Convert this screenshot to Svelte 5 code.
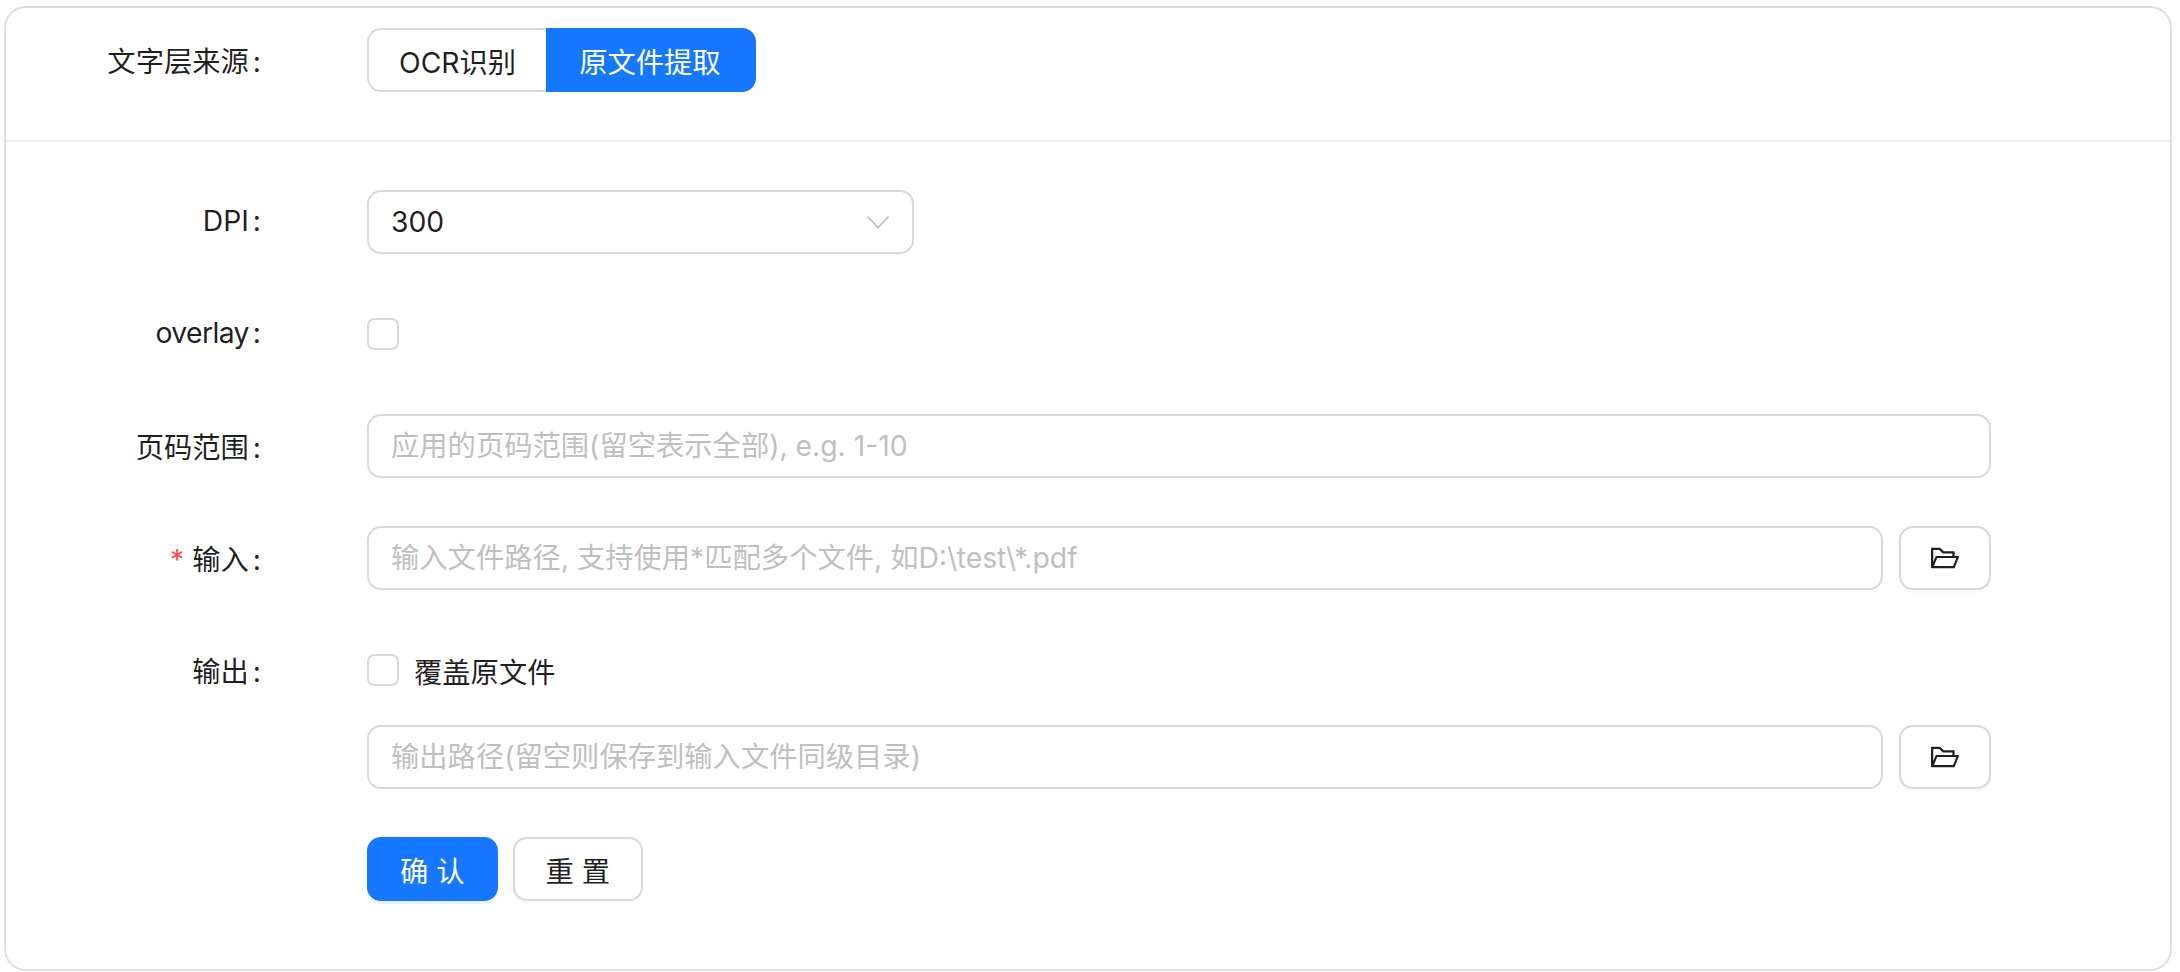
<script lang="ts">
  const folderPath =
    'M928 444H820V330.4c0-17.7-14.3-32-32-32H473L355.7 186.2a8.15 8.15 0 00-5.5-2.2H96c-17.7 0-32 14.3-32 32v592c0 17.7 14.3 32 32 32h698c13 0 24.8-7.9 29.7-20l134-332c1.5-3.8 2.3-7.9 2.3-12 0-17.7-14.3-32-32-32zM136 256h188.5l119.6 114.4H748V444H238c-13 0-24.8 7.9-29.7 20L136 643.2V256zm635.3 512H159l103.3-256h612.4L771.3 768z';

  let source = $state('file');
  let overlay = $state(false);
  let overwrite = $state(false);
</script>

{#snippet folderButton()}
  <button class="btn icon-btn" type="button" aria-label="选择文件">
    <svg viewBox="64 64 896 896" width="28" height="28" fill="currentColor"><path d={folderPath} /></svg>
  </button>
{/snippet}

<div class="card">
  <div class="top">
    <div class="row">
      <div class="label">文字层来源<span class="colon">:</span></div>
      <div class="control">
        <div class="segmented">
          <button type="button" class="seg" class:active={source === 'ocr'} onclick={() => (source = 'ocr')}>OCR识别</button>
          <button type="button" class="seg" class:active={source === 'file'} onclick={() => (source = 'file')}>原文件提取</button>
        </div>
      </div>
    </div>
  </div>

  <form class="form">
    <div class="row">
      <div class="label">DPI<span class="colon">:</span></div>
      <div class="control">
        <div class="select">
          <span>300</span>
          <svg class="chevron" viewBox="0 0 24 14" width="24" height="14" fill="none" stroke="currentColor" stroke-width="1.8"><path d="M1.5 1.5 12 12.5 22.5 1.5" /></svg>
        </div>
      </div>
    </div>

    <div class="row">
      <div class="label"><span class="latin">overlay</span><span class="colon">:</span></div>
      <div class="control">
        <button type="button" class="check" class:on={overlay} aria-label="overlay" onclick={() => (overlay = !overlay)}></button>
      </div>
    </div>

    <div class="row">
      <div class="label">页码范围<span class="colon">:</span></div>
      <div class="control wide">
        <input class="input" placeholder="应用的页码范围(留空表示全部), e.g. 1-10" />
      </div>
    </div>

    <div class="row">
      <div class="label"><span class="req">*</span>输入<span class="colon">:</span></div>
      <div class="control wide">
        <input class="input" placeholder="输入文件路径, 支持使用*匹配多个文件, 如D:\test\*.pdf" />
        {@render folderButton()}
      </div>
    </div>

    <div class="stack">
      <div class="row">
        <div class="label">输出<span class="colon">:</span></div>
        <div class="control">
          <button type="button" class="check" class:on={overwrite} aria-label="覆盖原文件" onclick={() => (overwrite = !overwrite)}></button>
          <span class="check-text">覆盖原文件</span>
        </div>
      </div>
      <div class="row">
        <div class="label"></div>
        <div class="control wide">
          <input class="input" placeholder="输出路径(留空则保存到输入文件同级目录)" />
          {@render folderButton()}
        </div>
      </div>
    </div>

    <div class="row">
      <div class="label"></div>
      <div class="control actions">
        <button class="btn primary" type="button">确 认</button>
        <button class="btn" type="button">重 置</button>
      </div>
    </div>
  </form>
</div>

<style>
  :global(body) {
    margin: 0;
    background: #fff;
  }
  .card {
    box-sizing: border-box;
    width: 2168px;
    height: 965px;
    margin: 6px 0 0 4px;
    border: 2px solid #dedede;
    border-radius: 22px;
    color: rgba(0, 0, 0, 0.88);
    font-family: Inter, "Noto Sans CJK SC", sans-serif;
    font-size: 28.3px;
    background: #fff;
  }
  .top {
    padding: 20px 0 48px;
    border-bottom: 2px solid #f0f0f0;
  }
  .form {
    display: flex;
    flex-direction: column;
    gap: 48px;
    padding-top: 48px;
  }
  .stack {
    display: flex;
    flex-direction: column;
    gap: 23px;
  }
  .row {
    display: flex;
    align-items: center;
    height: 64px;
  }
  .label {
    box-sizing: border-box;
    width: 361px;
    flex: none;
    padding-right: 106px;
    padding-bottom: 2px;
    text-align: right;
    white-space: nowrap;
  }
  .latin {
    letter-spacing: -0.6px;
  }
  .colon {
    margin-left: 4px;
  }
  .req {
    margin-right: 8px;
    color: #ff4d4f;
  }
  .control {
    display: flex;
    align-items: center;
    height: 100%;
    flex: none;
  }
  .wide {
    gap: 16px;
    width: 1624px;
  }
  .actions {
    gap: 15px;
  }
  .segmented {
    display: flex;
    height: 64px;
  }
  .seg {
    height: 64px;
    padding: 0 33px;
    border: 2px solid #d9d9d9;
    background: #fff;
    color: inherit;
    font: inherit;
    cursor: pointer;
  }
  .seg:first-child {
    padding: 0 30px;
    border-radius: 14px 0 0 14px;
    border-right: 0;
  }
  .seg:last-child {
    border-radius: 0 14px 14px 0;
    border-left: 0;
  }
  .seg.active {
    border-color: #1677ff;
    background: #1677ff;
    color: #fff;
  }
  .select {
    box-sizing: border-box;
    display: flex;
    align-items: center;
    justify-content: space-between;
    width: 547px;
    height: 64px;
    padding: 0 22px;
    border: 2px solid #d9d9d9;
    border-radius: 14px;
  }
  .chevron {
    color: #bfbfbf;
  }
  .check {
    box-sizing: border-box;
    width: 32px;
    height: 32px;
    padding: 0;
    border: 2px solid #d9d9d9;
    border-radius: 7px;
    background: #fff;
    cursor: pointer;
  }
  .check.on {
    border-color: #1677ff;
    background: #1677ff;
  }
  .check-text {
    margin-left: 15px;
  }
  .input {
    box-sizing: border-box;
    flex: 1;
    min-width: 0;
    height: 64px;
    padding: 0 22px;
    border: 2px solid #d9d9d9;
    border-radius: 14px;
    color: inherit;
    font: inherit;
    outline: none;
  }
  .input::placeholder {
    color: #bfbfbf;
    opacity: 1;
  }
  .btn {
    box-sizing: border-box;
    height: 64px;
    padding: 0 31px;
    border: 2px solid #d9d9d9;
    border-radius: 14px;
    background: #fff;
    color: inherit;
    font: inherit;
    box-shadow: 0 3px 0 rgba(0, 0, 0, 0.02);
    cursor: pointer;
  }
  .icon-btn {
    display: flex;
    align-items: center;
    justify-content: center;
    flex: none;
    width: 92px;
    padding: 0;
  }
  .primary {
    border-color: #1677ff;
    background: #1677ff;
    color: #fff;
    box-shadow: 0 3px 0 rgba(5, 145, 255, 0.1);
  }
</style>
